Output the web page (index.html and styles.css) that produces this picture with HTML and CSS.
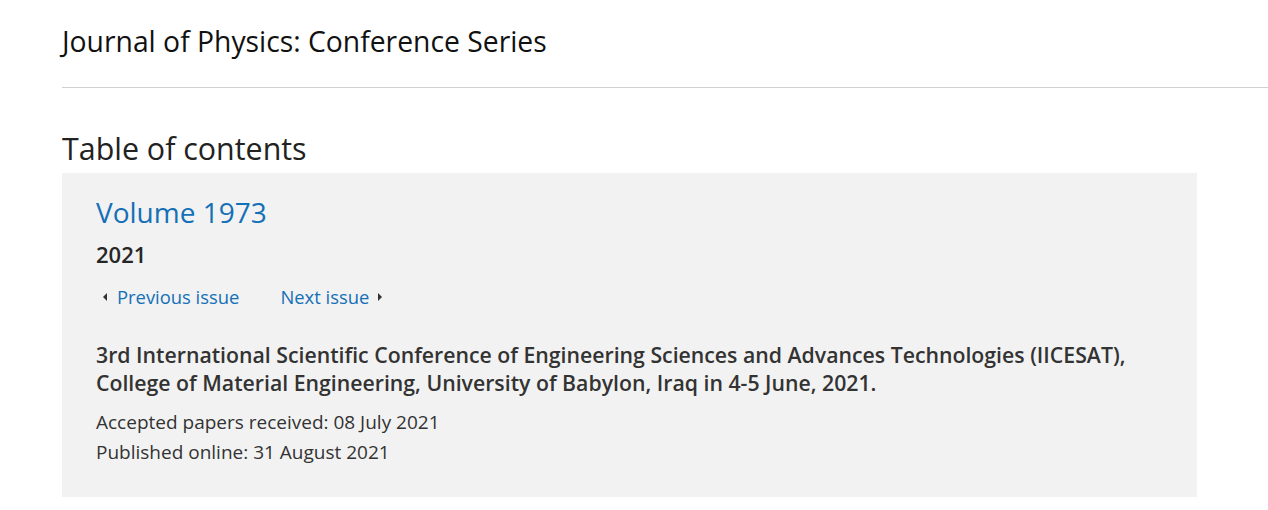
FILE: index.html
```html
<!DOCTYPE html>
<html lang="en">
<head>
<meta charset="utf-8">
<title>Journal of Physics: Conference Series</title>
<link rel="stylesheet" href="styles.css">
</head>
<body>
<header class="site-header">
  <div class="journal-title">Journal of Physics: Conference Series</div>
</header>
<main class="content">
  <h1 class="toc-title">Table of contents</h1>
  <section class="issue-box">
    <h2 class="volume">Volume 1973</h2>
    <div class="year">2021</div>
    <nav class="issue-nav">
      <a class="nav-link prev" href="#"><span class="tri tri-left"></span>Previous issue</a>
      <a class="nav-link next" href="#">Next issue<span class="tri tri-right"></span></a>
    </nav>
    <h3 class="conf-title">3rd International Scientific Conference of Engineering Sciences and Advances Technologies (IICESAT), College of Material Engineering, University of Babylon, Iraq in 4-5 June, 2021.</h3>
    <p class="meta">Accepted papers received: 08 July 2021</p>
    <p class="meta">Published online: 31 August 2021</p>
  </section>
</main>
</body>
</html>
```

FILE: styles.css
```css
* { box-sizing: border-box; }
html, body { margin: 0; padding: 0; background: #fff; }
body {
  font-family: "Open Sans", "Noto Sans", "Liberation Sans", sans-serif;
  color: #333;
}
.site-header {
  margin-left: 62px;
  padding-top: 22px;
  height: 88px;
  border-bottom: 1px solid #d0d0d0;
}
.journal-title {
  font-size: 28.3px;
  line-height: 38px;
  color: #111;
}
.content {
  margin-left: 62px;
  width: 1135px;
}
.toc-title {
  margin: 0;
  padding-top: 36px;
  font-size: 30.4px;
  font-weight: 400;
  line-height: 49px;
  color: #222;
}
.issue-box {
  background: #f2f2f2;
  padding: 20px 34px 30px;
}
.volume {
  margin: 0;
  font-size: 28px;
  font-weight: 400;
  line-height: 38px;
  color: #1470b7;
}
.year {
  margin-top: 8px;
  font-size: 22px;
  font-weight: 600;
  line-height: 30px;
  color: #262626;
}
.issue-nav {
  display: flex;
  gap: 41px;
  margin-top: 15px;
  padding-left: 7px;
}
.nav-link {
  display: flex;
  align-items: center;
  gap: 10px;
  font-size: 18.4px;
  line-height: 26px;
  color: #1470b7;
  text-decoration: none;
}
.next { gap: 9px; }
.tri {
  width: 0; height: 0;
  border-top: 4px solid transparent;
  border-bottom: 4px solid transparent;
}
.tri-left { border-right: 4px solid #333; }
.tri-right { border-left: 4px solid #333; }
.conf-title {
  margin: 31px 0 0;
  max-width: 1050px;
  font-size: 21.25px;
  font-weight: 600;
  line-height: 28px;
  color: #333;
}
.meta {
  margin: 0;
  font-size: 19px;
  line-height: 30px;
  color: #333;
}
.conf-title + .meta { margin-top: 10px; }
```
